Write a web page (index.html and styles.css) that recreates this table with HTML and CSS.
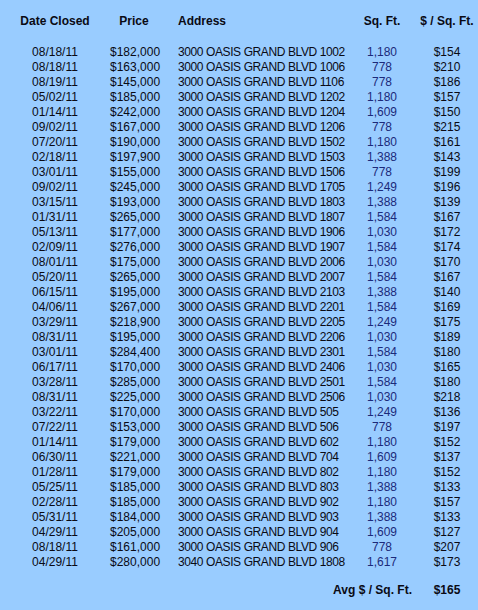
FILE: index.html
```html
<!DOCTYPE html>
<html>
<head>
<meta charset="utf-8">
<link rel="stylesheet" href="styles.css">
</head>
<body>
<table class="sales">
<colgroup>
<col class="c-date"><col class="c-price"><col class="c-addr"><col class="c-sqft"><col class="c-ppsf">
</colgroup>
<thead>
<tr class="head">
<th class="date">Date Closed</th><th class="price">Price</th><th class="addr">Address</th><th class="sqft">Sq. Ft.</th><th class="ppsf">$ / Sq. Ft.</th>
</tr>
</thead>
<tbody>
<tr><td class="date">08/18/11</td><td class="price">$182,000</td><td class="addr">3000 OASIS GRAND BLVD 1002</td><td class="sqft">1,180</td><td class="ppsf">$154</td></tr>
<tr><td class="date">08/18/11</td><td class="price">$163,000</td><td class="addr">3000 OASIS GRAND BLVD 1006</td><td class="sqft">778</td><td class="ppsf">$210</td></tr>
<tr><td class="date">08/19/11</td><td class="price">$145,000</td><td class="addr">3000 OASIS GRAND BLVD 1106</td><td class="sqft">778</td><td class="ppsf">$186</td></tr>
<tr><td class="date">05/02/11</td><td class="price">$185,000</td><td class="addr">3000 OASIS GRAND BLVD 1202</td><td class="sqft">1,180</td><td class="ppsf">$157</td></tr>
<tr><td class="date">01/14/11</td><td class="price">$242,000</td><td class="addr">3000 OASIS GRAND BLVD 1204</td><td class="sqft">1,609</td><td class="ppsf">$150</td></tr>
<tr><td class="date">09/02/11</td><td class="price">$167,000</td><td class="addr">3000 OASIS GRAND BLVD 1206</td><td class="sqft">778</td><td class="ppsf">$215</td></tr>
<tr><td class="date">07/20/11</td><td class="price">$190,000</td><td class="addr">3000 OASIS GRAND BLVD 1502</td><td class="sqft">1,180</td><td class="ppsf">$161</td></tr>
<tr><td class="date">02/18/11</td><td class="price">$197,900</td><td class="addr">3000 OASIS GRAND BLVD 1503</td><td class="sqft">1,388</td><td class="ppsf">$143</td></tr>
<tr><td class="date">03/01/11</td><td class="price">$155,000</td><td class="addr">3000 OASIS GRAND BLVD 1506</td><td class="sqft">778</td><td class="ppsf">$199</td></tr>
<tr><td class="date">09/02/11</td><td class="price">$245,000</td><td class="addr">3000 OASIS GRAND BLVD 1705</td><td class="sqft">1,249</td><td class="ppsf">$196</td></tr>
<tr><td class="date">03/15/11</td><td class="price">$193,000</td><td class="addr">3000 OASIS GRAND BLVD 1803</td><td class="sqft">1,388</td><td class="ppsf">$139</td></tr>
<tr><td class="date">01/31/11</td><td class="price">$265,000</td><td class="addr">3000 OASIS GRAND BLVD 1807</td><td class="sqft">1,584</td><td class="ppsf">$167</td></tr>
<tr><td class="date">05/13/11</td><td class="price">$177,000</td><td class="addr">3000 OASIS GRAND BLVD 1906</td><td class="sqft">1,030</td><td class="ppsf">$172</td></tr>
<tr><td class="date">02/09/11</td><td class="price">$276,000</td><td class="addr">3000 OASIS GRAND BLVD 1907</td><td class="sqft">1,584</td><td class="ppsf">$174</td></tr>
<tr><td class="date">08/01/11</td><td class="price">$175,000</td><td class="addr">3000 OASIS GRAND BLVD 2006</td><td class="sqft">1,030</td><td class="ppsf">$170</td></tr>
<tr><td class="date">05/20/11</td><td class="price">$265,000</td><td class="addr">3000 OASIS GRAND BLVD 2007</td><td class="sqft">1,584</td><td class="ppsf">$167</td></tr>
<tr><td class="date">06/15/11</td><td class="price">$195,000</td><td class="addr">3000 OASIS GRAND BLVD 2103</td><td class="sqft">1,388</td><td class="ppsf">$140</td></tr>
<tr><td class="date">04/06/11</td><td class="price">$267,000</td><td class="addr">3000 OASIS GRAND BLVD 2201</td><td class="sqft">1,584</td><td class="ppsf">$169</td></tr>
<tr><td class="date">03/29/11</td><td class="price">$218,900</td><td class="addr">3000 OASIS GRAND BLVD 2205</td><td class="sqft">1,249</td><td class="ppsf">$175</td></tr>
<tr><td class="date">08/31/11</td><td class="price">$195,000</td><td class="addr">3000 OASIS GRAND BLVD 2206</td><td class="sqft">1,030</td><td class="ppsf">$189</td></tr>
<tr><td class="date">03/01/11</td><td class="price">$284,400</td><td class="addr">3000 OASIS GRAND BLVD 2301</td><td class="sqft">1,584</td><td class="ppsf">$180</td></tr>
<tr><td class="date">06/17/11</td><td class="price">$170,000</td><td class="addr">3000 OASIS GRAND BLVD 2406</td><td class="sqft">1,030</td><td class="ppsf">$165</td></tr>
<tr><td class="date">03/28/11</td><td class="price">$285,000</td><td class="addr">3000 OASIS GRAND BLVD 2501</td><td class="sqft">1,584</td><td class="ppsf">$180</td></tr>
<tr><td class="date">08/31/11</td><td class="price">$225,000</td><td class="addr">3000 OASIS GRAND BLVD 2506</td><td class="sqft">1,030</td><td class="ppsf">$218</td></tr>
<tr><td class="date">03/22/11</td><td class="price">$170,000</td><td class="addr">3000 OASIS GRAND BLVD 505</td><td class="sqft">1,249</td><td class="ppsf">$136</td></tr>
<tr><td class="date">07/22/11</td><td class="price">$153,000</td><td class="addr">3000 OASIS GRAND BLVD 506</td><td class="sqft">778</td><td class="ppsf">$197</td></tr>
<tr><td class="date">01/14/11</td><td class="price">$179,000</td><td class="addr">3000 OASIS GRAND BLVD 602</td><td class="sqft">1,180</td><td class="ppsf">$152</td></tr>
<tr><td class="date">06/30/11</td><td class="price">$221,000</td><td class="addr">3000 OASIS GRAND BLVD 704</td><td class="sqft">1,609</td><td class="ppsf">$137</td></tr>
<tr><td class="date">01/28/11</td><td class="price">$179,000</td><td class="addr">3000 OASIS GRAND BLVD 802</td><td class="sqft">1,180</td><td class="ppsf">$152</td></tr>
<tr><td class="date">05/25/11</td><td class="price">$185,000</td><td class="addr">3000 OASIS GRAND BLVD 803</td><td class="sqft">1,388</td><td class="ppsf">$133</td></tr>
<tr><td class="date">02/28/11</td><td class="price">$185,000</td><td class="addr">3000 OASIS GRAND BLVD 902</td><td class="sqft">1,180</td><td class="ppsf">$157</td></tr>
<tr><td class="date">05/31/11</td><td class="price">$184,000</td><td class="addr">3000 OASIS GRAND BLVD 903</td><td class="sqft">1,388</td><td class="ppsf">$133</td></tr>
<tr><td class="date">04/29/11</td><td class="price">$205,000</td><td class="addr">3000 OASIS GRAND BLVD 904</td><td class="sqft">1,609</td><td class="ppsf">$127</td></tr>
<tr><td class="date">08/18/11</td><td class="price">$161,000</td><td class="addr">3000 OASIS GRAND BLVD 906</td><td class="sqft">778</td><td class="ppsf">$207</td></tr>
<tr><td class="date">04/29/11</td><td class="price">$280,000</td><td class="addr">3040 OASIS GRAND BLVD 1808</td><td class="sqft">1,617</td><td class="ppsf">$173</td></tr>
</tbody>
<tfoot>
<tr class="foot">
<td class="avg-label" colspan="4">Avg $ / Sq. Ft.</td><td class="ppsf avg-value">$165</td>
</tr>
</tfoot>
</table>
</body>
</html>
```
FILE: styles.css
```css
html, body {
  margin: 0;
  padding: 0;
  background: #99ccff;
  overflow: hidden;
}

body {
  font-family: "Liberation Sans", Arial, sans-serif;
  font-size: 12px;
  color: #0a0a14;
}

.sales {
  border-collapse: collapse;
  table-layout: fixed;
  width: 478px;
}

.c-date { width: 110px; }
.c-price { width: 48px; }
.c-addr { width: 194px; }
.c-sqft { width: 60px; }
.c-ppsf { width: 66px; }

.sales th,
.sales td {
  padding: 0;
  line-height: 15px;
  height: 15px;
  white-space: nowrap;
  vertical-align: middle;
}

.sales th {
  font-weight: bold;
  padding-top: 14px;
  padding-bottom: 15px;
}

.sales tbody td {
  padding-top: 1px;
  line-height: 14px;
  height: 14px;
}

.date, .price, .sqft, .ppsf {
  text-align: center;
}

.addr {
  text-align: left;
  padding-left: 20px !important;
}

td.addr {
  letter-spacing: -0.4px;
}

.ppsf {
  padding-left: 4px !important;
}

td.sqft {
  color: #1c2a7a;
}

.foot td {
  padding-top: 14px;
  font-weight: bold;
}

.avg-label {
  text-align: right;
}
```
